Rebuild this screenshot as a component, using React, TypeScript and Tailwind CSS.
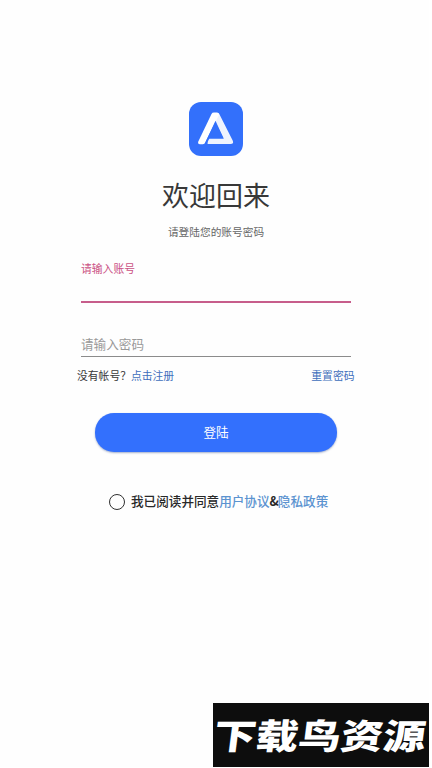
import type { ReactNode } from 'react';

function Logo() {
  return (
    <svg className="h-[54px] w-[54px]" viewBox="0 0 54 54" fill="none">
      <rect width="54" height="54" rx="12" fill="#3370fb" />
      <path d="M24 11H28.5Q29.7 11 30.3 12L43.8 38.8Q45 42 41.6 42H18.6V36.4H34.6L26.2 20Z" fill="#eef3fe" />
      <path d="M22.5 12Q23.2 10.6 25 10.6H28.2Q30.4 10.8 29.9 13L16.3 40.6Q15.5 42.2 13.8 42.2H11Q8.4 42 9.3 39.4Z" fill="#ffffff" />
      <path d="M26.5 18.8L34.7 36.6H20.4L17.7 41.6L16 41Z" fill="#3370fb" />
    </svg>
  );
}

function Link({ children }: { children: ReactNode }) {
  return <button className="text-[#3f6fbc]">{children}</button>;
}

export default function LoginPage() {
  return (
    <div className="h-[768px] w-[432px] bg-white font-['Noto_Sans_CJK_SC',sans-serif]">
      <div className="flex h-[767px] w-[429px] flex-col bg-[#fefefe]">
        {/* Header */}
        <div className="flex flex-col items-center pt-[102px] pl-[3px]">
          <Logo />
          <h1 className="mt-[19px] text-[27px] leading-10 text-[#383838]">欢迎回来</h1>
          <p className="mt-[9px] text-[10.7px] leading-4 text-[#666666]">请登陆您的账号密码</p>
        </div>

        {/* Form */}
        <div className="mr-[78px] ml-[81px] flex flex-col">
          <div className="mt-[20px] h-[43px] border-b-2 border-[#c75d8b]">
            <label className="block text-[10.8px] leading-4 text-[#cb5284]">请输入账号</label>
          </div>
          <div className="mt-[31px] h-[23px] border-b border-[#8b8b8b]">
            <label className="block text-[12.6px] leading-5 text-[#999999]">请输入密码</label>
          </div>
        </div>
        <div className="mt-[10px] mr-[74.5px] ml-[77px] flex justify-between text-[10.8px] leading-4">
          <div className="flex">
            <span className="text-[#383838]">没有帐号？</span>
            <Link>点击注册</Link>
          </div>
          <Link>重置密码</Link>
        </div>

        <button className="mt-[30px] ml-[95px] h-[39px] w-[242px] rounded-[19px] bg-[#3370fd] text-[12.6px] text-white shadow-[0_1px_2px_rgba(30,60,130,0.4)]">
          登陆
        </button>

        <div className="mt-[40px] ml-[109px] flex items-center text-[12.6px] leading-5 font-medium">
          <span className="mr-[6px] h-4 w-4 rounded-full border border-[#303030]" />
          <div className="-mt-px flex">
            <span className="text-[#292929]">我已阅读并同意</span>
            <span className="text-[#5b93d0]">用户协议</span>
            <span className="-mr-px font-bold text-[#292929]">&amp;</span>
            <span className="text-[#5b93d0]">隐私政策</span>
          </div>
        </div>

        {/* Site banner */}
        <div className="mt-auto flex h-16 w-[216px] items-center justify-center self-end bg-[#0d0d0d]">
          <span className="-translate-x-px -translate-y-px scale-y-[0.82] -skew-x-6 text-[42.4px] leading-none font-black whitespace-nowrap text-white">
            下载鸟资源
          </span>
        </div>
      </div>
    </div>
  );
}
